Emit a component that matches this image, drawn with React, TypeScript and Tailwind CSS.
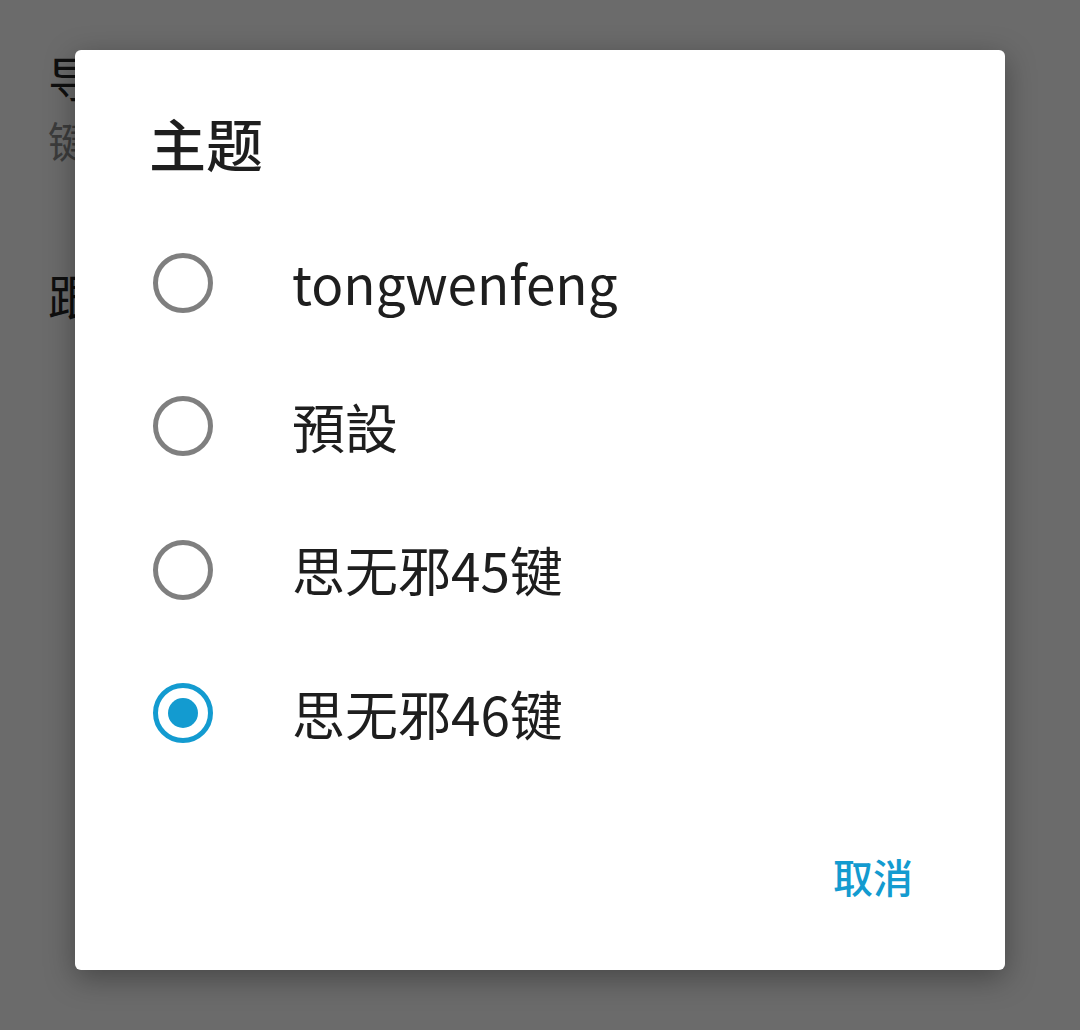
import React from "react";

const font = { fontFamily: '"Noto Sans CJK SC", "Noto Sans", sans-serif' };

function Radio({ checked }: { checked?: boolean }) {
  return (
    <div
      className={
        "w-[60px] h-[60px] rounded-full border-[5px] flex items-center justify-center shrink-0 " +
        (checked ? "border-[#139bd0]" : "border-[#7f7f7f]")
      }
    >
      {checked && <div className="w-[30px] h-[30px] rounded-full bg-[#139bd0]" />}
    </div>
  );
}

export default function App() {
  const items = [
    { label: "tongwenfeng", checked: false },
    { label: "預設", checked: false },
    { label: "思无邪45键", checked: false },
    { label: "思无邪46键", checked: true },
  ];
  return (
    <div className="relative w-[1080px] h-[1030px] bg-[#6b6b6b] overflow-hidden" style={font}>
      <div className="flex flex-col pl-[48px] pt-[44px]">
        <div className="text-[48px] leading-[64px] text-[#0f0f0f]">导航栏设置</div>
        <div className="text-[42px] leading-[56px] text-[#3c3c3c] mt-[4px]">键盘布局</div>
        <div className="text-[48px] leading-[64px] text-[#0f0f0f] mt-[94px]">跟随系统</div>
      </div>
      <div className="absolute left-[75px] top-[50px] w-[930px] h-[920px] bg-white rounded-[6px] shadow-[0_8px_30px_rgba(0,0,0,0.35)] flex flex-col">
        <div className="pl-[74px] pt-[64px] text-[57px] leading-[57px] text-[#1e1e1e] font-medium">主题</div>
        <div className="flex flex-col mt-[40px]">
          {items.map((it) => (
            <div key={it.label} className="flex items-center h-[143.5px] pl-[78px]">
              <Radio checked={it.checked} />
              <div className="ml-[79px] text-[53px] leading-none text-[#1e1e1e]">{it.label}</div>
            </div>
          ))}
        </div>
        <div className="flex-1" />
        <div className="flex justify-end pr-[92px] pb-[74px]">
          <div className="text-[40px] leading-none font-medium text-[#139bd0]">取消</div>
        </div>
      </div>
    </div>
  );
}
